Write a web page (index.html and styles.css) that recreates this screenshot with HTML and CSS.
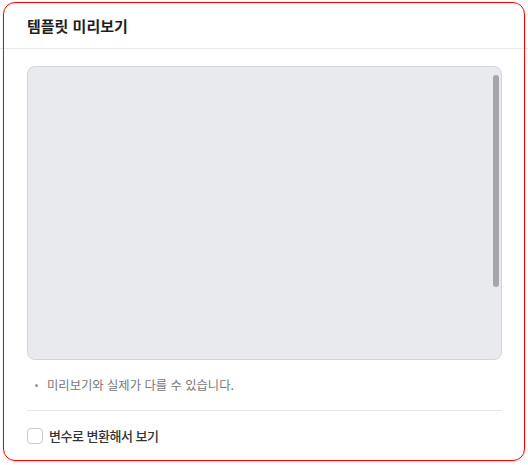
FILE: index.html
```html
<!DOCTYPE html>
<html lang="ko">
<head>
    <meta charset="UTF-8">
    <meta name="viewport" content="width=device-width, initial-scale=1.0">
    <title>템플릿 미리보기</title>
    <link rel="stylesheet" href="styles.css">
</head>
<body>

    <!-- Preview Modal -->
    <div class="modal">
        <div class="modal-header">
            <h2>템플릿 미리보기</h2>
        </div>

        <div class="modal-body">
            <div class="preview-box">
                <div class="scroll-thumb"></div>
            </div>

            <ul class="notes">
                <li>미리보기와 실제가 다를 수 있습니다.</li>
            </ul>

            <div class="option-row">
                <label class="check-label">
                    <input type="checkbox" class="check">
                    <span>변수로 변환해서 보기</span>
                </label>
            </div>
        </div>
    </div>

</body>
</html>
```

FILE: styles.css
```css
/* General Styles */
body {
    font-family: "Noto Sans CJK KR", "Noto Sans", sans-serif;
    margin: 0;
    background-color: #fff;
    color: #222;
}

.modal {
    position: relative;
    width: 528px;
    height: 465px;
    box-sizing: border-box;
}

/* highlight outline drawn over the modal */
.modal::after {
    content: "";
    position: absolute;
    top: 2px;
    left: 3px;
    right: 3px;
    bottom: 4px;
    border: 1px solid #ff0000;
    border-radius: 12px;
    box-shadow: 0 1px 2px rgba(0, 0, 0, 0.12);
    pointer-events: none;
}

.modal-header {
    height: 49px;
    padding: 0 27px;
    border-bottom: 1px solid #e8e8ea;
    display: flex;
    align-items: center;
    box-sizing: border-box;
    padding-top: 2px;
}

.modal-header h2 {
    margin: 0;
    font-size: 15px;
    font-weight: 700;
    color: #1e1e1e;
}

.modal-body {
    padding: 17px 26px 0 27px;
}

/* Preview area */
.preview-box {
    height: 294px;
    background-color: #e9eaee;
    border: 1px solid #d4d5da;
    border-radius: 8px;
    box-sizing: border-box;
    display: flex;
    justify-content: flex-end;
    padding: 8px 1px 0 0;
}

.scroll-thumb {
    width: 6px;
    height: 212px;
    margin-right: 1px;
    background-color: #a6a6aa;
    border-radius: 3px;
}

/* Notes */
.notes {
    list-style: none;
    margin: 0;
    padding: 15px 0 15px;
    border-bottom: 1px solid #e8e8ea;
}

.notes li {
    position: relative;
    padding-left: 20px;
    font-size: 12.3px;
    line-height: 20px;
    color: #777;
}

.notes li::before {
    content: "";
    position: absolute;
    left: 8px;
    top: 9px;
    width: 3px;
    height: 3px;
    border-radius: 50%;
    background-color: #999;
}

/* Checkbox option */
.option-row {
    padding-top: 17px;
}

.check-label {
    display: flex;
    align-items: center;
    gap: 6px;
    font-size: 13px;
    line-height: 16px;
    font-weight: 500;
    letter-spacing: -0.5px;
    color: #333;
    cursor: pointer;
}

.check {
    appearance: none;
    width: 16px;
    height: 16px;
    margin: 0;
    border: 1px solid #c9c9cc;
    border-radius: 4px;
    background: #fff;
}
```
